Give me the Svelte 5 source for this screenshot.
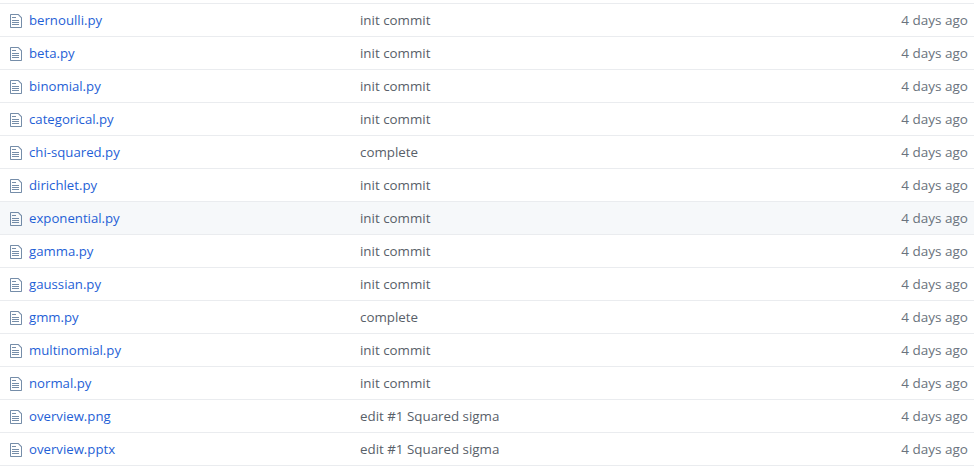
<script>
  const init = 'init commit';
  const done = 'complete';
  const edit = 'edit #1 Squared sigma';
  const files = [
    ['bernoulli.py', init], ['beta.py', init], ['binomial.py', init], ['categorical.py', init],
    ['chi-squared.py', done], ['dirichlet.py', init], ['exponential.py', init], ['gamma.py', init],
    ['gaussian.py', init], ['gmm.py', done], ['multinomial.py', init], ['normal.py', init],
    ['overview.png', edit], ['overview.pptx', edit]
  ];
</script>

<div class="files">
  {#each files as [name, msg]}
    <div class="row" class:hover={name === 'exponential.py'}>
      <span class="icon">
        <svg width="12" height="16" viewBox="0 0 12 16" aria-hidden="true">
          <path fill-rule="evenodd" d="M6 5H2V4h4v1zM2 8h7V7H2v1zm0 2h7V9H2v1zm0 2h7v-1H2v1zm10-7.5V14c0 .55-.45 1-1 1H1c-.55 0-1-.45-1-1V2c0-.55.45-1 1-1h7.5L12 4.5zM11 5L8 2H1v12h10V5z"/>
        </svg>
      </span>
      <a class="name" href="#top">{name}</a>
      <span class="msg">{msg}</span>
      <span class="age">4 days ago</span>
    </div>
  {/each}
</div>

<style>
  :global(body) {
    margin: 0;
    background: #fff;
  }
  .files {
    padding-top: 3px;
    font-family: "Open Sans", "Noto Sans", sans-serif;
    font-size: 13.35px;
    line-height: 20px;
  }
  .row {
    display: grid;
    grid-template-columns: 29px 331px 1fr auto;
    align-items: center;
    height: 32px;
    border-top: 1px solid #eaecef;
  }
  .row:last-child {
    border-bottom: 1px solid #eaecef;
  }
  .hover {
    background: #f6f8fa;
  }
  .icon {
    display: flex;
    padding: 2px 0 0 10px;
  }
  .icon path {
    fill: rgba(3, 47, 98, 0.55);
  }
  .name {
    color: #1f5fd6;
    font-size: 13.2px;
    text-decoration: none;
  }
  .msg {
    color: #586069;
  }
  .age {
    color: #6a737d;
    font-size: 13.5px;
    padding-right: 6px;
  }
</style>
